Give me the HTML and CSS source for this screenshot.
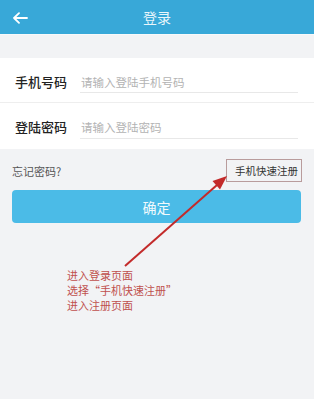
FILE: index.html
```html
<!DOCTYPE html>
<html lang="zh">
<head>
<meta charset="utf-8">
<link rel="stylesheet" href="styles.css">
</head>
<body>
<div class="page">
  <header class="topbar">
    <svg class="back" width="16" height="12" viewBox="0 0 16 12"><path d="M15 6H2M7 1.2L2 6l5 4.8" fill="none" stroke="#fff" stroke-width="1.8" stroke-linecap="round" stroke-linejoin="round"/></svg>
    <div class="title">登录</div>
  </header>
  <div class="panel">
    <div class="row r1">
      <div class="label">手机号码</div>
      <div class="field">请输入登陆手机号码</div>
    </div>
    <div class="row r2">
      <div class="label">登陆密码</div>
      <div class="field">请输入登陆密码</div>
    </div>
  </div>
  <div class="links">
    <span class="forgot">忘记密码?</span>
    <span class="register">手机快速注册</span>
  </div>
  <div class="btn">确定</div>
  <div class="note">
    <div class="line">进入登录页面</div>
    <div class="line">选择“手机快速注册”</div>
    <div class="line">进入注册页面</div>
  </div>
  <svg class="arrow" width="314" height="399" viewBox="0 0 314 399">
    <line x1="125" y1="266" x2="217" y2="185" stroke="#c32a2a" stroke-width="2"/>
    <polygon points="227,176 220,189.5 212.5,181" fill="#c32a2a"/>
  </svg>
</div>
</body>
</html>
```
FILE: styles.css
```css
* { box-sizing: border-box; }
html, body { margin: 0; padding: 0; }
body {
  background: #f2f3f5;
  font-family: "Noto Sans CJK SC", "Noto Sans", sans-serif;
  width: 314px;
  height: 399px;
  overflow: hidden;
}
.page { position: relative; width: 314px; height: 399px; }
.topbar {
  height: 35px;
  background: #38a8d8;
  display: flex;
  align-items: center;
  justify-content: center;
  position: relative;
  border-bottom: 1px solid #f7f9fa;
}
.back { position: absolute; left: 12px; top: 12px; }
.title { color: #eaf6fb; font-size: 14px; line-height: 18px; }
.panel {
  margin-top: 23px;
  background: #fff;
}
.row {
  display: flex;
  align-items: flex-start;
  padding-left: 15px;
  padding-right: 16px;
}
.r1 { height: 45px; padding-top: 16px; border-bottom: 1px solid #eeeeee; }
.r2 { height: 46px; padding-top: 16px; }
.label {
  width: 65px;
  font-size: 13px;
  line-height: 16px;
  color: #222;
  font-weight: 500;
}
.field {
  flex: 1;
  font-size: 11.5px;
  line-height: 16px;
  color: #b3b3b3;
  padding-left: 1px;
  height: 19px;
  border-bottom: 1px solid #e8e8e8;
}
.r2 .field { height: 20px; }
.links {
  margin-top: 10px;
  height: 23px;
  display: flex;
  justify-content: space-between;
  align-items: center;
  padding-left: 12px;
  padding-right: 12px;
}
.forgot { font-size: 11px; color: #555; }
.register {
  height: 23px;
  line-height: 21px;
  font-size: 10.5px;
  color: #333;
  border: 1px solid #b99c9c;
  padding: 0 3px 0 8px;
}
.btn {
  margin: 8px 13px 0 12px;
  height: 33px;
  border-radius: 4px;
  background: #4bbbe7;
  color: #f2fafd;
  font-size: 14px;
  display: flex;
  align-items: center;
  justify-content: center;
}
.note {
  margin-top: 45px;
  padding-left: 67px;
  color: #c0504d;
  display: flex;
  flex-direction: column;
  gap: 1px;
}
.line {
  font-size: 11px;
  line-height: 14px;
  height: 14px;
  overflow: visible;
}
.arrow { position: absolute; left: 0; top: 0; pointer-events: none; }
```
